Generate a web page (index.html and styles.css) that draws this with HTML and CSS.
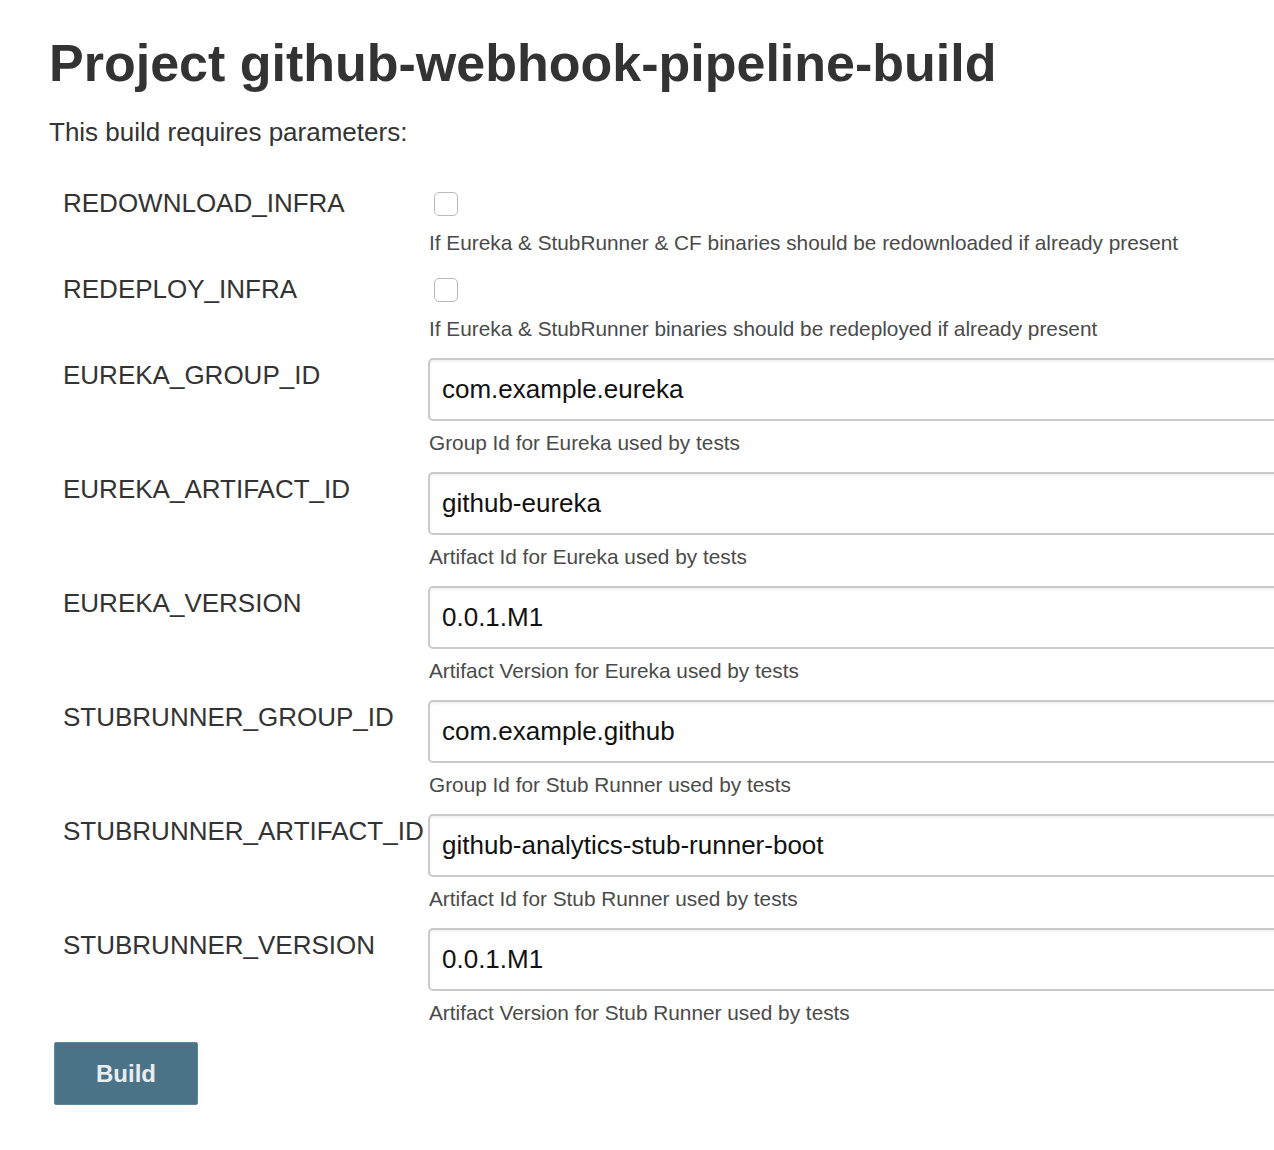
FILE: index.html
```html
<!DOCTYPE html>
<html>
<head>
<meta charset="utf-8">
<title>Project github-webhook-pipeline-build</title>
<link rel="stylesheet" href="styles.css">
</head>
<body>
<main class="page">
  <h1 class="title">Project github-webhook-pipeline-build</h1>
  <p class="intro">This build requires parameters:</p>
  <form class="params">
    <div class="param param-check">
      <div class="label">REDOWNLOAD_INFRA</div>
      <div class="value">
        <input type="checkbox" class="check">
        <div class="desc">If Eureka &amp; StubRunner &amp; CF binaries should be redownloaded if already present</div>
      </div>
    </div>
    <div class="param param-check">
      <div class="label">REDEPLOY_INFRA</div>
      <div class="value">
        <input type="checkbox" class="check">
        <div class="desc">If Eureka &amp; StubRunner binaries should be redeployed if already present</div>
      </div>
    </div>
    <div class="param param-text">
      <div class="label">EUREKA_GROUP_ID</div>
      <div class="value">
        <div class="field-wrap"><input type="text" class="field" value="com.example.eureka"></div>
        <div class="desc">Group Id for Eureka used by tests</div>
      </div>
    </div>
    <div class="param param-text">
      <div class="label">EUREKA_ARTIFACT_ID</div>
      <div class="value">
        <div class="field-wrap"><input type="text" class="field" value="github-eureka"></div>
        <div class="desc">Artifact Id for Eureka used by tests</div>
      </div>
    </div>
    <div class="param param-text">
      <div class="label">EUREKA_VERSION</div>
      <div class="value">
        <div class="field-wrap"><input type="text" class="field" value="0.0.1.M1"></div>
        <div class="desc">Artifact Version for Eureka used by tests</div>
      </div>
    </div>
    <div class="param param-text">
      <div class="label">STUBRUNNER_GROUP_ID</div>
      <div class="value">
        <div class="field-wrap"><input type="text" class="field" value="com.example.github"></div>
        <div class="desc">Group Id for Stub Runner used by tests</div>
      </div>
    </div>
    <div class="param param-text">
      <div class="label">STUBRUNNER_ARTIFACT_ID</div>
      <div class="value">
        <div class="field-wrap"><input type="text" class="field" value="github-analytics-stub-runner-boot"></div>
        <div class="desc">Artifact Id for Stub Runner used by tests</div>
      </div>
    </div>
    <div class="param param-text">
      <div class="label">STUBRUNNER_VERSION</div>
      <div class="value">
        <div class="field-wrap"><input type="text" class="field" value="0.0.1.M1"></div>
        <div class="desc">Artifact Version for Stub Runner used by tests</div>
      </div>
    </div>
    <div class="actions">
      <button type="button" class="build">Build</button>
    </div>
  </form>
</main>
</body>
</html>
```

FILE: styles.css
```css
html, body {
  margin: 0;
  padding: 0;
  background: #ffffff;
}

body {
  font-family: "Liberation Sans", Arial, Helvetica, sans-serif;
  color: #333333;
}

.page {
  padding: 33px 0 0 49px;
}

.title {
  margin: 0;
  font-size: 52px;
  line-height: 60px;
  font-weight: 700;
  color: #333333;
  white-space: nowrap;
}

.intro {
  margin: 24px 0 0 0;
  font-size: 26px;
  line-height: 30px;
  color: #333333;
}

.params {
  margin-top: 39px;
  display: flex;
  flex-direction: column;
  gap: 15px;
}

.param {
  display: grid;
  grid-template-columns: 379px 1fr;
}

.label {
  padding: 2px 0 0 14px;
  font-size: 26px;
  line-height: 30px;
  color: #333333;
  white-space: nowrap;
}

.value {
  display: flex;
  flex-direction: column;
  align-items: flex-start;
  min-width: 0;
}

.check {
  -webkit-appearance: none;
  appearance: none;
  margin: 6px 0 0 6px;
  width: 24px;
  height: 24px;
  border: 1.5px solid #b9b9b9;
  border-radius: 5px;
  background: #ffffff;
  box-sizing: border-box;
}

.param-check .desc {
  margin-top: 13px;
}

.field-wrap {
  width: 100%;
  overflow: hidden;
}

.field {
  display: block;
  box-sizing: border-box;
  width: calc(100% + 12px);
  height: 63px;
  margin: 0;
  padding: 0 12px;
  border: 2px solid #cacaca;
  border-radius: 5px;
  box-shadow: inset 0 2px 3px rgba(0, 0, 0, 0.06);
  font-family: "Liberation Sans", Arial, Helvetica, sans-serif;
  font-size: 26px;
  color: #111111;
  background: #ffffff;
  outline: none;
}

.param-text .desc {
  margin-top: 8px;
}

.desc {
  font-size: 20.8px;
  line-height: 28px;
  color: #4a4a4a;
  padding-left: 1px;
  white-space: nowrap;
}

.actions {
  padding-left: 5px;
}

.build {
  width: 144px;
  height: 63px;
  border: 1px solid #5d889e;
  border-radius: 2px;
  background: #4b7388;
  color: #e8eef1;
  font-family: "Liberation Sans", Arial, Helvetica, sans-serif;
  font-size: 24px;
  font-weight: 700;
  padding: 0;
}
```
